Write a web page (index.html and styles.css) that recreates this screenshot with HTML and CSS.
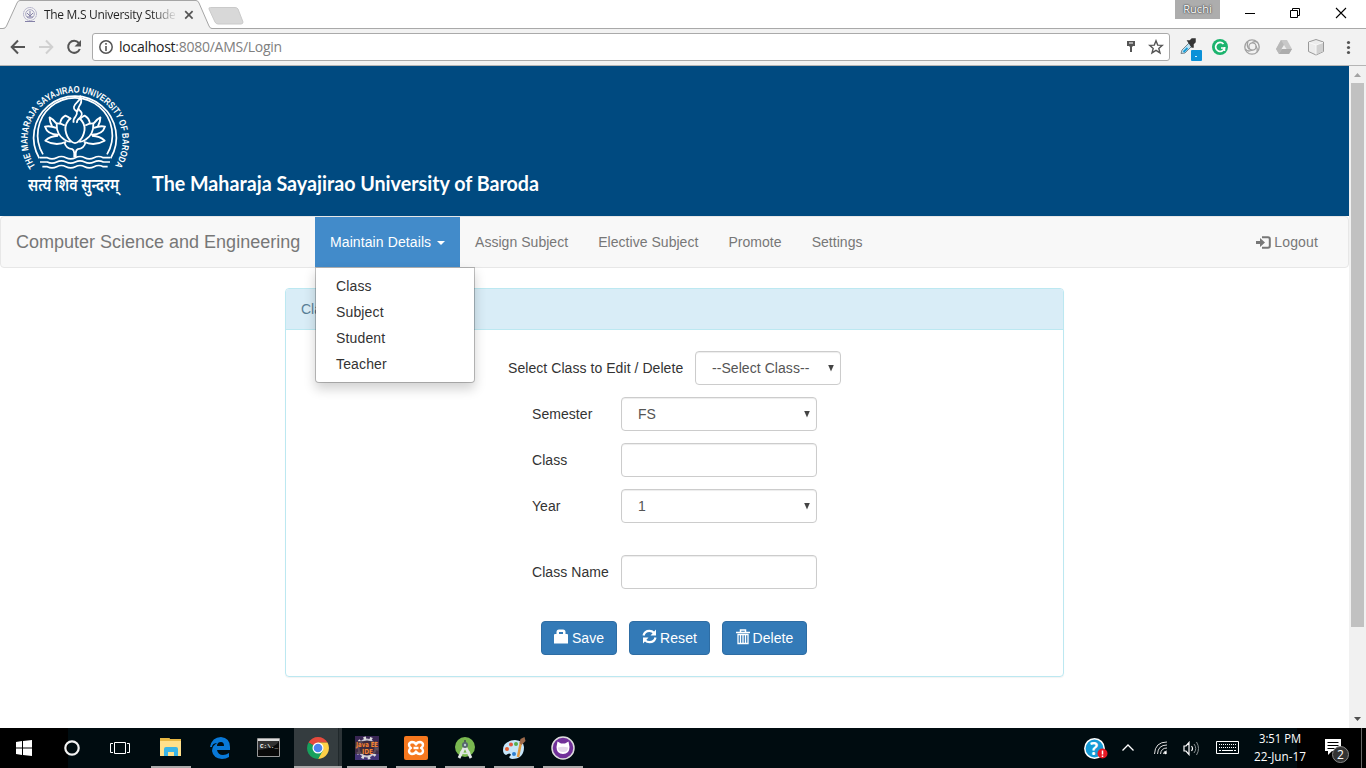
FILE: index.html
```html
<!DOCTYPE html>
<html lang="en">
<head>
<meta charset="utf-8">
<title>The M.S University Student</title>
<link rel="stylesheet" href="styles.css">
</head>
<body>
<header class="tabstrip">
  <svg class="tab-shape" width="260" height="30" viewBox="0 0 260 30">
    <path d="M0 28.500H3Q5.500 28.500 6.500 26L17 3Q18 .5 20 .5H196Q198 .5 199 3L209 26Q210 28.500 212 28.500H260V30H0z" fill="#f2f2f2"/>
    <path d="M0 28.500H3Q5.500 28.500 6.500 26L17 3Q18 .5 20 .5H196Q198 .5 199 3L209 26Q210 28.500 212 28.500H260" fill="none" stroke="#a5a5a5"/>
    <path d="M210.500 7.500H235Q237 7.500 238 9L243 22Q243 24 241 24H218Q216 24 215 22L209 9Q208.500 7.500 210.500 7.500z" fill="#d8d8d8" stroke="#cacaca"/>
  </svg>
  <div class="tab">
    <svg width="16" height="16" viewBox="0 0 16 16" fill="none" stroke="#a9a7c4"><circle cx="8" cy="7" r="6.500" stroke-dasharray="1.500 .5"/><circle cx="8" cy="7" r="4.300"/><path d="M8 4v6M5 6l3 3 3-3M5 10h6M3 14.500h10" stroke="#8582a8"/></svg>
    <span class="tab-title">The M.S University Stude</span>
    <svg class="tab-close" width="10" height="10" viewBox="0 0 10 10"><path d="M1.200 1.200l7.400 7.400M8.600 1.200L1.200 8.600" stroke="#555" stroke-width="1.700"/></svg>
  </div>
  <div class="window-controls">
    <span class="profile">Ruchi</span>
    <svg width="46" height="28" viewBox="0 0 46 28" stroke="#000" fill="none"><path d="M6 13.500h10"/></svg>
    <svg width="46" height="28" viewBox="0 0 46 28" stroke="#000" fill="none"><path d="M5.500 10.500h7v7h-7zM7.500 10V8.500h7v7H13"/></svg>
    <svg width="35" height="28" viewBox="0 0 35 28" stroke="#000" fill="none"><path d="M5 8l10 10M15 8L5 18" stroke-width="1.100"/></svg>
  </div>
</header>
<div class="toolbar">
  <svg width="28" height="20" viewBox="0 0 28 20" fill="none" stroke="#555" stroke-width="2"><path d="M25 10H12M18 3.500L11.700 10l6.300 6.500"/></svg>
  <svg width="28" height="20" viewBox="0 0 28 20" fill="none" stroke="#d0d0d0" stroke-width="2"><path d="M11 10h13M18 3.500l6.300 6.500-6.300 6.500"/></svg>
  <svg width="28" height="20" viewBox="0 0 28 20"><path d="M22.800 6A6 6 0 1 0 23.800 12" fill="none" stroke="#555" stroke-width="2"/><path d="M25 3v6.500h-6.500z" fill="#555"/></svg>
  <div class="omnibox">
    <svg width="14" height="14" viewBox="0 0 14 14"><circle cx="7" cy="7" r="6.200" fill="none" stroke="#555" stroke-width="1.500"/><path d="M6.200 3h1.600v1.700H6.200zM6.200 6h1.600v5H6.200z" fill="#555"/></svg>
    <span class="url">localhost<span>:8080/AMS/Login</span></span>
    <svg class="key" width="10" height="14" viewBox="0 0 10 14"><path d="M1 1h8v5H7l-1 1v5H4V7L3 6H1z" fill="#555"/><path d="M3 3h4" stroke="#fff"/></svg>
    <svg width="16" height="16" viewBox="0 0 16 16"><path d="M8 1.800l1.700 4.300 4.600.3-3.500 3 1.200 4.500L8 11.400l-4 2.500 1.200-4.500-3.500-3 4.600-.3z" fill="none" stroke="#555" stroke-width="1.400"/></svg>
  </div>
  <div class="extensions">
    <svg width="28" height="26" viewBox="0 0 28 26"><path d="M3 17.500l1-3.500 7-7 3 3-7 7z" fill="#bde4f5" stroke="#77858d"/><path d="M5.500 16l4-4" stroke="#159bd7" stroke-width="2"/><path d="M10 5l2 0 2-2h3v3l-2 2v3h-1z" fill="#353535" stroke="#353535" stroke-width="1.500"/><rect x="13" y="14" width="11" height="11" rx="1" fill="#0b91d8"/><path d="M17 20.500h2" stroke="#d2efff"/></svg>
    <svg width="32" height="26" viewBox="0 0 32 26"><circle cx="14" cy="11" r="8" fill="#1cb46e"/><path d="M17.500 8A4.500 4.500 0 1 0 18.500 12H15" fill="none" stroke="#fff" stroke-width="1.700"/><path d="M18.500 11v4" stroke="#fff" stroke-width="1.500"/></svg>
    <svg width="32" height="26" viewBox="0 0 32 26" fill="none" stroke="#a0a0a0" stroke-width="1.300"><circle cx="14" cy="11" r="7.200"/><circle cx="14.500" cy="10.500" r="3.600"/><path d="M7.500 13q2 3.500 7 1M10 5.500q-2 5 1.500 8M20 7q-2-2.500-6-.5M19 16q1-3-1-6"/></svg>
    <svg width="32" height="26" viewBox="0 0 32 26"><path d="M11 4h6l5 9-3 5H9l-3-5z" fill="#c8c8c8"/><path d="M11 4l3 5-5 9-3-5z" fill="#b8b8b8"/><path d="M9 18l3-5h10l-3 5z" fill="#acacac"/><path d="M11.500 13l2.500-4 2.500 4z" fill="#eee"/></svg>
    <svg width="32" height="26" viewBox="0 0 32 26" stroke="#aaa" stroke-linejoin="round"><path d="M14 3.500l7.500 2.500v9.500L14 19l-7.500-3.500V6z" fill="#ececec" stroke="#999"/><path d="M14 9l7-2.500v9L14 18.500z" fill="#d0d0d0" stroke="none"/><path d="M7 6.500L14 9l7-2.500M14 9v9.500" fill="none" stroke="#f8f8f8"/></svg>
    <svg width="32" height="26" viewBox="0 0 32 26" fill="#555"><circle cx="14.500" cy="6.500" r="1.600"/><circle cx="14.500" cy="11.500" r="1.600"/><circle cx="14.500" cy="16.500" r="1.600"/></svg>
  </div>
</div>

<main class="viewport">
  <div class="page">
    <div class="banner">
      <svg width="560" height="150" viewBox="0 0 560 150">
        <defs><path id="ring" d="M35.500 100.500A47.500 47.500 0 1 1 114.500 100.500"/></defs>
        <text class="crest-text"><textPath href="#ring" textLength="204" lengthAdjust="spacingAndGlyphs">THE MAHARAJA SAYAJIRAO UNIVERSITY OF BARODA</textPath></text>
        <g transform="translate(35 25) scale(.33333)" fill="none" stroke="#fff" stroke-width="5.200" stroke-linejoin="round">
          <path d="M13 202A124 124 0 1 1 227 202"/>
          <path d="M24 190A112 112 0 1 1 216 190"/>
          <path d="M15 200H37q14 7 28 0 14-7 28 0 14 7 28 0 14-7 28 0 14 7 28 0 14-7 28 0H225M15 213H37q14 7 28 0 14-7 28 0 14 7 28 0 14-7 28 0 14 7 28 0 14-7 28 0H225M22 227H37q14 7 28 0 14-7 28 0 14 7 28 0 14-7 28 0 14 7 28 0 14-7 28 0H218"/>
          <g transform="translate(120 130) scale(1.060) translate(-120 -130)">
            <path d="M109 83Q91 98 93 118q3 19 14 30 7 7 13 7 6 0 13-7 11-11 14-30 2-20-16-35"/>
            <path d="M91 105q-12-7-23-6-1 32 22 46 8 6 18 6M149 105q12-7 23-6 1 32-22 46-8 6-18 6"/>
            <path d="M78 98q2-14 15-21 11 4 14 11M162 98q-2-14-15-21-8 3-12 9M67 99Q57 86 48 82q0 12 7 25M173 99q10-13 19-17 0 12-7 25"/>
            <path d="M67 112q-17-7-32-4 7 24 40 23M173 112q17-7 32-4-7 24-40 23M72 134q-23 1-36 14 30 17 59 3M168 134q23 1 36 14-30 17-59 3"/>
            <path d="M90 152q4 18 22 20 5 2 6 11v12M150 152q-4 18-22 20-5 2-6 11v12"/>
          </g>
          <path d="M116 95q-3-9 6-19 8-12-1-18-11-9 5-24 11-10 10-19 7 18-3 30-6 8 3 15 10 9-2 21-10 8-8 15M132 50q-7 7-4 13" fill="#004a80"/>
        </g>
        <text class="motto" x="28" y="125" textLength="91" lengthAdjust="spacingAndGlyphs">सत्यं शिवं सुन्दरम्</text>
        <text class="university" x="152" y="124.500" textLength="387" lengthAdjust="spacingAndGlyphs">The Maharaja Sayajirao University of Baroda</text>
      </svg>
    </div>
    <nav class="navbar">
      <span class="brand">Computer Science and Engineering</span>
      <div class="nav-item active">Maintain Details<i class="caret"></i>
        <ul class="dropdown"><li>Class</li><li>Subject</li><li>Student</li><li>Teacher</li></ul>
      </div>
      <span class="nav-item">Assign Subject</span>
      <span class="nav-item">Elective Subject</span>
      <span class="nav-item">Promote</span>
      <span class="nav-item">Settings</span>
      <span class="nav-item logout"><svg width="15" height="13" viewBox="0 0 15 13"><path d="M0 5h4V2l5 4.500L4 11V8H0z" fill="#777"/><path d="M6 1.200h6q1.800 0 1.800 1.800v7q0 1.800-1.800 1.800H6" fill="none" stroke="#777" stroke-width="2"/></svg>Logout</span>
    </nav>
    <section class="panel">
      <div class="panel-heading">Class</div>
      <div class="panel-body">
        <div class="form-row picker"><label>Select Class to Edit / Delete</label><div class="control select">--Select Class--<i></i></div></div>
        <div class="form-row"><label>Semester</label><div class="control select">FS<i></i></div></div>
        <div class="form-row"><label>Class</label><div class="control"></div></div>
        <div class="form-row"><label>Year</label><div class="control select">1<i></i></div></div>
        <div class="form-row spaced"><label>Class Name</label><div class="control"></div></div>
        <div class="buttons">
          <div class="btn save"><svg width="14" height="15" viewBox="0 0 14 15"><path d="M0 6q0-1 1-1h1.500V3Q2.500.5 5 .5h4q2.500 0 2.500 2.500v2H13q1 0 1 1v8.500H0zM5 5h4V3H5z" fill="#fff" fill-rule="evenodd"/></svg>Save</div>
          <div class="btn reset"><svg width="15" height="15" viewBox="0 0 15 15"><path d="M1.500 6.500Q2.500 1.800 7.500 1.800q2.500 0 4.500 2M13.500 8.500q-1 4.700-6 4.700-2.500 0-4.500-2" fill="none" stroke="#fff" stroke-width="2.200"/><path d="M14 .5v6H8.500zM1 14.500v-6h5.500z" fill="#fff"/></svg>Reset</div>
          <div class="btn delete"><svg width="14" height="16" viewBox="0 0 14 16" fill="none" stroke="#fff"><path d="M0 3.500h14M4.500 3V1h5v2" stroke-width="1.500"/><path d="M2 5v9.500h10V5M4.500 6v8M7 6v8M9.500 6v8M1.500 5.500h11" stroke-width="1.300"/></svg>Delete</div>
        </div>
      </div>
    </section>
  </div>
  <div class="scrollbar">
    <svg width="17" height="17" viewBox="0 0 17 17"><path d="M5 11l3.500-4 3.500 4z" fill="#a3a3a3"/></svg>
    <div class="thumb"></div>
    <svg width="17" height="17" viewBox="0 0 17 17"><path d="M5 6l3.500 4L12 6z" fill="#505050"/></svg>
  </div>
</main>

<footer class="taskbar">
  <div class="task start"><svg width="16" height="16" viewBox="0 0 16 16" fill="#fff"><path d="M0 2l6-1v6.500H0zM7 1l9-1v7.500H7zM0 8.500h6V15l-6-1zM7 8.500h9V16l-9-1z"/></svg></div>
  <div class="task start"><svg width="18" height="18" viewBox="0 0 18 18"><circle cx="9" cy="9" r="6.700" fill="none" stroke="#f3f3f3" stroke-width="2.200"/></svg></div>
  <div class="task start view"><svg width="20" height="14" viewBox="0 0 20 14" fill="none" stroke="#fff"><path d="M4.500 1.500h11v11h-11zM3 2.500H.5v9H3M17 2.500h2.500v9H17"/></svg></div>
  <div class="task open"><svg width="22" height="20" viewBox="0 0 22 20"><path d="M0 1q0-1 1-1h8l2 2h10v16H0z" fill="#ffe08b"/><path d="M0 3h21V1H10L9 0H1Q0 0 0 1z" fill="#e8b844"/><path d="M4 18v-7q0-2 2-2h10q2 0 2 2v7h-4v-4H8v4z" fill="#39b4e6"/></svg></div>
  <div class="task"><svg width="20" height="22" viewBox="0 0 20 22"><path d="M0 10Q2 0 11 0q9 1 9 10v3H7q1 5 6 5 3 0 6-2v4q-3 2-7 2-9-1-10-8 0-6 6-8-6 0-6 4zM7 9h7q0-4-3-4-4 0-4 4z" fill="#0878d7" fill-rule="evenodd"/></svg></div>
  <div class="task"><svg width="23" height="20" viewBox="0 0 23 20"><path d="M.5.5h22v18H.5z" fill="#090909" stroke="#999"/><path d="M1 1h21v2H1z" fill="#dedede"/><path d="M1 3h21q-3 7-21 9z" fill="#333"/><text class="prompt" x="3" y="10">C:\._</text></svg></div>
  <div class="task open current"><svg width="22" height="22" viewBox="0 0 22 22"><path d="M11 11L1.500 5.500A11 11 0 0 1 20.500 5.500H11z" fill="#e44a3d"/><path d="M11 11V5.500h9.500A11 11 0 0 1 11 22l4.500-9z" fill="#fed047"/><path d="M1.500 5.500A11 11 0 0 0 11 22l4.700-8L11 11z" fill="#17a05d"/><circle cx="11" cy="11" r="5.500" fill="#fff"/><circle cx="11" cy="11" r="4.300" fill="#4b83ef"/></svg></div>
  <div class="task open"><svg width="24" height="24" viewBox="0 0 24 24"><path d="M0 0h24v24H0z" fill="#433477"/><path d="M0 0h24v11H0z" fill="#382653"/><circle cx="12" cy="12" r="8.500" fill="#30223d" stroke="#c9c4d0" stroke-width="2"/><circle cx="12" cy="12" r="10" fill="none" stroke="#ddd" stroke-width="3" stroke-dasharray="2.500 3.700"/><path d="M0 5h24v13H0z" fill="#402c3c" opacity=".8"/><text class="ide" x="1" y="11" textLength="22" lengthAdjust="spacingAndGlyphs">Java EE</text><text class="ide" x="7" y="18" textLength="11" lengthAdjust="spacingAndGlyphs">IDE</text></svg></div>
  <div class="task open"><svg width="24" height="24" viewBox="0 0 24 24"><rect width="24" height="24" rx="2" fill="#f6781e"/><path d="M12 8.500Q11 6 8 6 5 6.500 5 9q0 2 2 3-2 1-2 3 0 2.500 3 3 3 0 4-2.500Q13 18 16 18q3-.5 3-3 0-2-2-3 2-1 2-3 0-2.500-3-3-3 0-4 2.500zM9.500 12h5" fill="none" stroke="#fff" stroke-width="2.400" stroke-linejoin="round"/></svg></div>
  <div class="task open"><svg width="22" height="24" viewBox="0 0 22 24"><circle cx="11" cy="11" r="10" fill="#79b850"/><path d="M11 4v5" stroke="#506852" stroke-width="2"/><path d="M10.500 11L5 22M11.500 11L17 22" stroke="#e4e8e8" stroke-width="2.800"/><path d="M6 16q5 3 10 0" fill="none" stroke="#dce5df" stroke-width="1.500"/><circle cx="11" cy="9" r="3" fill="#56666e"/><circle cx="11" cy="9" r="1.200" fill="#bbcbd0"/></svg></div>
  <div class="task open"><svg width="24" height="24" viewBox="0 0 24 24"><path d="M1 14Q1 5 13 4q9 1 9 7 0 12-12 12-5-1-1-4-1-3-5 0-3-1-3-5z" fill="#c6e6fa"/><circle cx="5" cy="13" r="2" fill="#e95e2f"/><circle cx="9" cy="8.500" r="2" fill="#e0563e"/><circle cx="14" cy="8" r="2" fill="#57ad4c"/><circle cx="12" cy="18" r="2" fill="#2e80d0"/><path d="M16 21l3-15" stroke="#df9940" stroke-width="2.500"/><path d="M17.500 7l1-4 4-2 1 4-4 4z" fill="#9c6a4b"/></svg></div>
  <div class="task open"><svg width="24" height="24" viewBox="0 0 24 24"><circle cx="12" cy="12" r="11" fill="#713099" stroke="#ddd" stroke-width="1.500"/><path d="M6.500 5.500l3.500 2h4l3.500-2 1 5.500q0 7-6.500 7t-6.500-7z" fill="#fff"/><path d="M7 11.500q5-1.500 10 0 0 4.500-5 4.500t-5-4.500z" fill="#e5d9eb"/></svg></div>
  <div class="tray">
    <svg class="help" width="24" height="24" viewBox="0 0 24 24"><circle cx="10.500" cy="10.500" r="9.700" fill="#159bd6" stroke="#fff" stroke-width="1.500"/><text class="question" x="6" y="16.500">?</text><circle cx="18.500" cy="15.500" r="5" fill="#e91924"/><path d="M18.500 12.500v4M18.500 17.500V19" stroke="#fff" stroke-width="1.500"/></svg>
    <svg width="14" height="10" viewBox="0 0 14 10" fill="none" stroke="#fff"><path d="M1.500 7.500L7 2l5.500 5.500" stroke-width="1.300"/></svg>
    <svg class="wifi" width="14" height="14" viewBox="0 0 14 14" fill="none" stroke="#ddd"><path d="M.5 13Q1 1 13 1M3.500 13Q4 4 13 4M6.500 13Q7 7 13 7M9.500 13Q9.500 10 13 10"/><circle cx="11.500" cy="12" r="1.300" fill="#fff" stroke="none"/></svg>
    <svg class="sound" width="17" height="15" viewBox="0 0 17 15" fill="none" stroke="#fff"><path d="M1 5h2l3-3.500v12L3 10H1zM8.500 5q2 2.500 0 5" stroke-width="1.200"/><path d="M11 3q3.500 4.500 0 9M13.500 1q4 6.500 0 13" stroke="#899092"/></svg>
    <svg class="keyboard" width="23" height="14" viewBox="0 0 23 14" fill="none" stroke="#fff"><path d="M.5.5h22v12H.5z"/><path d="M3 3.500h17M3 6.500h17" stroke-dasharray="1 1"/><path d="M3 9.500h2M6 9.500h11M18 9.500h2"/></svg>
    <div class="clock"><svg width="56" height="38" viewBox="0 0 56 38"><text x="7" y="14" textLength="42" lengthAdjust="spacingAndGlyphs">3:51 PM</text><text x="2" y="32" textLength="52" lengthAdjust="spacingAndGlyphs">22-Jun-17</text></svg></div>
    <div class="notify"><svg width="26" height="26" viewBox="0 0 26 26"><path d="M1 1h16v12H8l-4 4v-4H1z" fill="#fff"/><path d="M3.500 4.500h11M3.500 7.500h11M3.500 10.500h7" stroke="#000"/><circle cx="16.500" cy="16.500" r="8" fill="#333" stroke="#888"/><text class="badge" x="13" y="21">2</text></svg></div>
  </div>
</footer>
</body>
</html>
```
FILE: styles.css
```css
* { box-sizing: border-box; }
body { margin: 0; width: 1366px; height: 768px; overflow: hidden; display: flex; flex-direction: column; font: 14px/20px "Liberation Sans", Arial, sans-serif; color: #333; background: #fff; }
svg { display: block; flex: none; }
.tabstrip { height: 29px; flex: none; display: flex; justify-content: space-between; position: relative; border-bottom: 1px solid #a9a9a9; }
.tab-shape { position: absolute; left: 0; top: 0; }
.tab { position: relative; display: flex; align-items: center; padding: 1px 0 0 22px; height: 29px; }
.tab-title { width: 131px; margin-left: 6px; white-space: nowrap; font: 12px/18px "Open Sans", sans-serif; letter-spacing: -.3px; color: transparent; background: linear-gradient(to right, #222 82%, #ddd); -webkit-background-clip: text; background-clip: text; }
.tab-close { margin-left: 9px; }
.window-controls { display: flex; align-items: flex-start; width: 191px; }
.profile { width: 45px; flex: none; height: 19px; margin-right: 19px; background: #adadad; color: #fff; text-align: center; font: 11px/18px "Open Sans", sans-serif; text-shadow: 0 0 2px #333, 0 0 1px #333; }
.toolbar { height: 37px; flex: none; display: flex; align-items: center; background: #f2f2f2; border-bottom: 1px solid #b5b5b5; }
.omnibox { height: 28px; width: 1078px; margin-left: 8px; background: #fff; border: 1px solid #aaa; border-radius: 3px; display: flex; align-items: center; padding: 0 5px 0 6px; }
.url { margin-left: 6px; flex: 1; font: 14px/24px "Open Sans", sans-serif; letter-spacing: -.26px; color: #222; }
.url span { color: #808080; }
.key { margin-right: 12px; }
.extensions { display: flex; padding: 4px 0 0 8px; }
.viewport { height: 662px; flex: none; display: flex; }
.page { width: 1349px; }
.banner { height: 150px; background: #004a80; }
.crest-text { font: bold 9.5px "Liberation Sans", sans-serif; fill: #fff; }
.motto { font: 600 17px "Noto Sans Devanagari", "Noto Sans", serif; fill: #fff; }
.university { font: bold 20px Lato, sans-serif; fill: #fff; }
.navbar { height: 52px; display: flex; background: #f8f8f8; border: 1px solid #e7e7e7; border-radius: 4px; margin-bottom: 20px; color: #777; }
.brand { padding: 15px; width: 314px; font-size: 18px; white-space: nowrap; }
.nav-item { padding: 15px; height: 50px; white-space: nowrap; letter-spacing: .04px; }
.active { position: relative; color: #fff; background: #428bca; width: 145px; letter-spacing: .1px; }
.caret { display: inline-block; margin-left: 6px; border: 4px solid transparent; border-top-color: #fff; border-bottom: 0; vertical-align: middle; }
.dropdown { position: absolute; z-index: 2; top: 50px; left: 0; width: 160px; margin: 0; padding: 5px 0; list-style: none; color: #333; background: #fff; background-clip: padding-box; border: 1px solid rgba(0,0,0,.23); border-radius: 0 0 4px 4px; box-shadow: 0 6px 12px rgba(0,0,0,.18); }
.dropdown li { padding: 3px 20px; letter-spacing: .15px; }
.logout { margin-left: auto; display: flex; align-items: center; padding-right: 30px; letter-spacing: .15px; }
.logout svg { margin-right: 3px; }
.panel { width: 779px; height: 389px; margin-left: 285px; border: 1px solid #bce8f1; border-radius: 4px; box-shadow: 0 1px 1px rgba(0,0,0,.05); }
.panel-heading { height: 41px; padding: 10px 15px; color: #5a7f96; background: #d9edf7; border-bottom: 1px solid #bce8f1; border-radius: 3px 3px 0 0; }
.panel-body { padding: 21px 246px 0; letter-spacing: .06px; }
.form-row { display: flex; align-items: center; height: 34px; margin-bottom: 12px; }
.form-row label { width: 89px; flex: none; white-space: nowrap; }
.control { width: 196px; height: 34px; flex: none; border: 1px solid #ccc; border-radius: 4px; box-shadow: inset 0 1px 1px rgba(0,0,0,.075); padding: 6px 16px; color: #555; }
.picker { margin-left: -24px; }
.picker label { width: 187px; }
.picker .control { width: 146px; white-space: nowrap; }
.select { display: flex; align-items: center; justify-content: space-between; padding-right: 6px; }
.select i { flex: none; width: 6px; height: 7px; background: #444; clip-path: polygon(0 0, 100% 0, 50% 100%); }
.form-row.spaced { margin-top: 32px; }
.buttons { display: flex; gap: 12px; margin: 32px 0 0 9px; }
.btn { height: 34px; display: flex; align-items: center; justify-content: center; gap: 4px; color: #fff; background: #337ab7; border: 1px solid #2e6da4; border-radius: 4px; }
.btn svg { margin-top: -3px; }
.save { width: 76px; }
.reset { width: 81px; gap: 3px; }
.delete { width: 85px; gap: 3px; }
.scrollbar { width: 17px; background: #f1f1f1; display: flex; flex-direction: column; }
.thumb { width: 13px; height: 544px; margin: 0 0 auto 2px; background: #c1c1c1; }
.taskbar { height: 40px; flex: none; display: flex; color: #fff; background: linear-gradient(to right, #000 68px, #000c10 68px, #000c10 1297px, #000 1297px); }
.task { width: 49px; height: 40px; display: flex; align-items: center; justify-content: center; }
.start { width: 48px; }
.view { margin-right: 2px; }
.open { background: linear-gradient(#aaa, #aaa) 5px 38px / 40px 2px no-repeat; }
.current { background: linear-gradient(#aaa, #aaa) 1px 38px / 48px 2px no-repeat, linear-gradient(to right, transparent 1px, #343c3f 1px, #343c3f 45px, #20282b 45px, #20282b 46px, #2c3437 46px) 0 0 no-repeat; }
.prompt { font: bold 6px "Liberation Mono", monospace; fill: #fff; }
.ide { font: bold 7px "DejaVu Sans", sans-serif; fill: #f58330; }
.tray { margin-left: auto; margin-right: 4px; width: 279px; display: flex; align-items: center; border-right: 1px solid #666; }
.question { font: bold 17px "Open Sans", sans-serif; fill: #fff; }
.help { margin: 4px 13px 0 1px; }
.wifi { margin-left: 19px; }
.sound { margin-left: 15px; }
.keyboard { margin-left: 16px; }
.clock { margin-left: 13px; }
.clock text { font: 12px "Open Sans", sans-serif; fill: #fff; }
.notify { margin-left: 16px; padding: 5px 11px 0 0; height: 40px; display: flex; align-items: center; }
.badge { font: 12px "Open Sans", sans-serif; fill: #fff; }
```
